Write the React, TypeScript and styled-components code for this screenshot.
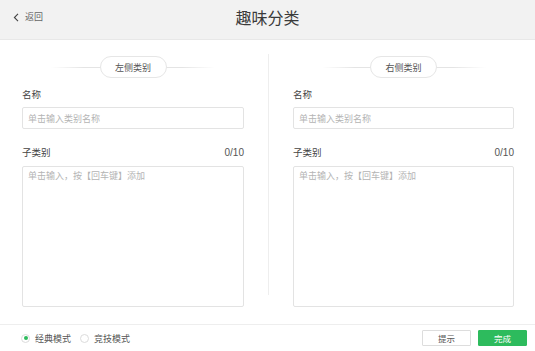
import styled, { createGlobalStyle } from "styled-components";

const GlobalStyle = createGlobalStyle`
  html, body {
    margin: 0;
    padding: 0;
    background: #ffffff;
  }

  body {
    font-family: "Noto Sans CJK SC", "Noto Sans", sans-serif;
    color: #333333;
  }

  * {
    box-sizing: border-box;
  }
`;

const Page = styled.div`
  display: flex;
  flex-direction: column;
  width: 535px;
  height: 351px;
  overflow: hidden;
`;

const Header = styled.header`
  position: relative;
  display: flex;
  align-items: center;
  justify-content: center;
  height: 40px;
  flex-shrink: 0;
  background: #f2f2f2;
  border-bottom: 1px solid #e8e8e8;
`;

const BackLink = styled.a`
  position: absolute;
  left: 13px;
  top: 10px;
  display: flex;
  align-items: center;
  gap: 6px;
  font-size: 9px;
  line-height: 14px;
  color: #666666;
  text-decoration: none;
  cursor: pointer;
`;

const Title = styled.h1`
  margin: 0 0 6px;
  font-size: 16px;
  font-weight: 400;
  line-height: 22px;
  color: #3a3a3a;
`;

const Main = styled.main`
  flex: 1;
  display: grid;
  grid-template-columns: 268px 1px 1fr;
`;

const Column = styled.section<{ $padLeft: number; $padRight: number }>`
  display: flex;
  flex-direction: column;
  padding: 16px ${(p) => p.$padRight}px 0 ${(p) => p.$padLeft}px;
`;

const Divider = styled.div`
  background: #eeeeee;
  margin: 14px 0 29px;
`;

const PillRow = styled.div`
  position: relative;
  display: flex;
  justify-content: center;
  height: 22px;

  &::before {
    content: "";
    position: absolute;
    top: 11px;
    left: 50%;
    width: 164px;
    height: 1px;
    transform: translateX(-50%);
    background: linear-gradient(
      to right,
      rgba(225, 225, 225, 0),
      #e4e4e4 20%,
      #e4e4e4 80%,
      rgba(225, 225, 225, 0)
    );
  }
`;

const Pill = styled.span`
  position: relative;
  display: flex;
  align-items: center;
  justify-content: center;
  width: 67px;
  height: 22px;
  border: 1px solid #e6e6e6;
  border-radius: 11px;
  background: #ffffff;
  font-size: 9px;
  color: #555555;
`;

const FieldHead = styled.div<{ $top: number }>`
  display: flex;
  justify-content: space-between;
  align-items: center;
  margin-top: ${(p) => p.$top}px;
  height: 14px;
`;

const Label = styled.span`
  font-size: 9.5px;
  font-weight: 400;
  color: #444444;
`;

const Counter = styled.span`
  font-family: "Liberation Sans", Arial, sans-serif;
  font-size: 10px;
  color: #555555;
`;

const TextInput = styled.input`
  display: block;
  width: 100%;
  height: 22px;
  margin-top: 6px;
  padding: 0 5px;
  border: 1px solid #e3e3e3;
  border-radius: 2px;
  font-family: inherit;
  font-size: 9px;
  color: #333333;
  outline: none;

  &::placeholder {
    color: #b4b4b4;
  }
`;

const TextArea = styled.textarea`
  display: block;
  width: 100%;
  height: 141px;
  margin-top: 7px;
  padding: 3px 5px;
  border: 1px solid #e3e3e3;
  border-radius: 2px;
  font-family: inherit;
  font-size: 9px;
  line-height: 12px;
  color: #333333;
  resize: none;
  outline: none;

  &::placeholder {
    color: #b4b4b4;
  }
`;

const Footer = styled.footer`
  display: flex;
  align-items: center;
  justify-content: space-between;
  height: 27px;
  flex-shrink: 0;
  padding: 0 8px 0 21px;
  border-top: 1px solid #eeeeee;
`;

const Modes = styled.div`
  display: flex;
  align-items: center;
  gap: 9px;
`;

const Mode = styled.label`
  display: flex;
  align-items: center;
  gap: 5px;
  font-size: 9px;
  color: #555555;
  cursor: pointer;
`;

const RadioDot = styled.span<{ $checked?: boolean }>`
  position: relative;
  width: 9px;
  height: 9px;
  border-radius: 50%;
  border: 1px solid #dcdcdc;
  background: #ffffff;

  &::after {
    content: "";
    display: ${(p) => (p.$checked ? "block" : "none")};
    position: absolute;
    top: 1.5px;
    left: 1.5px;
    width: 4px;
    height: 4px;
    border-radius: 50%;
    background: #2dbb5d;
  }
`;

const Actions = styled.div`
  display: flex;
  gap: 7px;
`;

const Button = styled.button<{ $primary?: boolean }>`
  width: 49px;
  height: 16px;
  padding: 0;
  border: 1px solid ${(p) => (p.$primary ? "#2dbb5d" : "#dddddd")};
  border-radius: 1px;
  background: ${(p) => (p.$primary ? "#2dbb5d" : "#ffffff")};
  color: ${(p) => (p.$primary ? "#ffffff" : "#555555")};
  font-family: inherit;
  font-size: 8.5px;
  line-height: 14px;
  cursor: pointer;
`;

interface SideProps {
  title: string;
  padLeft: number;
  padRight: number;
}

const CategorySide = ({ title, padLeft, padRight }: SideProps) => (
  <Column $padLeft={padLeft} $padRight={padRight}>
    <PillRow>
      <Pill>{title}</Pill>
    </PillRow>

    <FieldHead $top={9}>
      <Label>名称</Label>
    </FieldHead>
    <TextInput placeholder="单击输入类别名称" />

    <FieldHead $top={16}>
      <Label>子类别</Label>
      <Counter>0/10</Counter>
    </FieldHead>
    <TextArea placeholder="单击输入，按【回车键】添加" />
  </Column>
);

const App = () => {
  return (
    <Page>
      <GlobalStyle />
      <Header>
        <BackLink>
          <svg width="6" height="9" viewBox="0 0 6 9" fill="none">
            <path d="M5 0.8 1.4 4.5 5 8.2" stroke="#444" strokeWidth="1.1" />
          </svg>
          返回
        </BackLink>
        <Title>趣味分类</Title>
      </Header>

      <Main>
        <CategorySide title="左侧类别" padLeft={22} padRight={24} />
        <Divider />
        <CategorySide title="右侧类别" padLeft={24} padRight={21} />
      </Main>

      <Footer>
        <Modes>
          <Mode>
            <RadioDot $checked />
            经典模式
          </Mode>
          <Mode>
            <RadioDot />
            竞技模式
          </Mode>
        </Modes>
        <Actions>
          <Button>提示</Button>
          <Button $primary>完成</Button>
        </Actions>
      </Footer>
    </Page>
  );
};

export default App;
